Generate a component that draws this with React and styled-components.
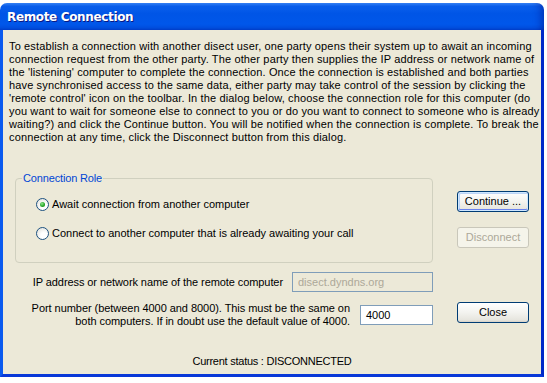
import styled, { createGlobalStyle } from "styled-components";

const GlobalStyle = createGlobalStyle`
  body {
    margin: 0;
    background: #fff;
    font-family: "Liberation Sans", Arial, sans-serif;
  }
`;

const Window = styled.div`
  width: 544px;
  margin-top: 3px;
  display: flex;
  flex-direction: column;
`;

const TitleBar = styled.div`
  height: 27px;
  border-radius: 7px 7px 0 0;
  background: linear-gradient(
    to bottom,
    #3a8cff 0%,
    #0a5fec 12%,
    #0055e6 40%,
    #0057ea 80%,
    #0050e0 92%,
    #0043cf 100%
  );
  box-shadow: inset -6px 0 8px -4px rgba(0, 20, 140, 0.6);
  display: flex;
  align-items: center;
  padding-left: 7px;
  padding-top: 1px;
  box-sizing: border-box;
`;

const Title = styled.span`
  font-family: "DejaVu Sans", sans-serif;
  font-weight: bold;
  font-size: 12px;
  color: #fff;
  text-shadow: 1px 1px 0 #0a1883;
  letter-spacing: -0.35px;
`;

const Body = styled.div`
  height: 347px;
  box-sizing: border-box;
  background: #ece9d8;
  border-left: 3px solid #0a5aef;
  border-right: 3px solid #0028c8;
  border-bottom: 3px solid #0838d8;
  padding: 10px 6px 0;
  font-size: 11px;
  line-height: 13px;
  color: #000;
`;

const Intro = styled.div`
  white-space: nowrap;
  letter-spacing: 0.14px;
`;

const Layout = styled.div`
  display: grid;
  grid-template-columns: 418px 72px;
  column-gap: 24px;
  align-items: start;
  margin-top: 28px;
  padding-left: 6px;
`;

const GroupBox = styled.fieldset`
  margin: 0;
  padding: 0;
  min-width: 0;
  border: 1px solid #d0d0bf;
  border-radius: 4px;
  height: 91px;
  box-sizing: border-box;
`;

const Legend = styled.legend`
  margin-left: 6px;
  padding: 0 1px;
  color: #0046d5;
  letter-spacing: -0.15px;
`;

const Options = styled.div`
  display: flex;
  flex-direction: column;
  gap: 16px;
  padding: 13px 0 0 20px;
`;

const Option = styled.label`
  display: flex;
  align-items: center;
  gap: 3px;
  height: 13px;
`;

const RadioCircle = styled.span`
  width: 13px;
  height: 13px;
  box-sizing: border-box;
  border-radius: 50%;
  border: 1px solid #1c5180;
  background: radial-gradient(circle at 65% 70%, #fff 30%, #dcdcd5 100%);
  display: flex;
  align-items: center;
  justify-content: center;
  &::after {
    content: "";
    display: ${(p) => (p.$checked ? "block" : "none")};
    width: 5px;
    height: 5px;
    border-radius: 50%;
    background: radial-gradient(circle at 40% 35%, #8ee88e 0%, #21a121 60%, #1a7f1a 100%);
  }
`;

const ButtonColumn = styled.div`
  display: flex;
  flex-direction: column;
  gap: 15px;
  padding-top: 19px;
`;

const Button = styled.div`
  width: 72px;
  height: 21px;
  box-sizing: border-box;
  border-radius: 3px;
  border: 1px solid ${(p) => (p.$disabled ? "#c9c7ba" : "#003c74")};
  background: ${(p) =>
    p.$disabled
      ? "#f5f4ea"
      : "linear-gradient(to bottom, #fff 0%, #f3f3ef 50%, #e6e5de 90%, #d6d0c5 100%)"};
  box-shadow: ${(p) =>
    p.$default
      ? "inset 0 0 0 1px #cee7ff, inset 0 -1px 0 1px #6982ee, inset 1px 1px 0 1px #bcd4f6"
      : "none"};
  color: ${(p) => (p.$disabled ? "#aca899" : "#000")};
  display: flex;
  align-items: center;
  justify-content: center;
`;

const FieldRow = styled.div`
  display: flex;
  align-items: center;
  justify-content: flex-end;
  gap: ${(p) => p.$gap}px;
  margin-top: ${(p) => p.$top}px;
`;

const FieldLabel = styled.div`
  text-align: right;
  white-space: nowrap;
  letter-spacing: ${(p) => p.$spacing}px;
`;

const TextBox = styled.div`
  width: ${(p) => p.$width}px;
  height: 20px;
  box-sizing: border-box;
  border: 1px solid #7f9db9;
  background: ${(p) => (p.$disabled ? "#ece9d8" : "#fff")};
  color: ${(p) => (p.$disabled ? "#aca899" : "#000")};
  padding: 3px 0 0 5px;
`;

const CloseCell = styled.div`
  align-self: start;
  margin-top: 10px;
`;

const Status = styled.div`
  text-align: center;
  margin-top: 27px;
  letter-spacing: -0.25px;
`;

const introLines = [
  "To establish a connection with another disect user, one party opens their system up to await an incoming",
  "connection request from the other party. The other party then supplies the IP address or network name of",
  "the 'listening' computer to complete the connection. Once the connection is established and both parties",
  "have synchronised access to the same data, either party may take control of the session by clicking the",
  "'remote control' icon on the toolbar. In the dialog below, choose the connection role for this computer (do",
  "you want to wait for someone else to connect to you or do you want to connect to someone who is already",
  "waiting?) and click the Continue button. You will be notified when the connection is complete. To break the",
  "connection at any time, click the Disconnect button from this dialog.",
];

export default function App() {
  return (
    <>
      <GlobalStyle />
      <Window>
        <TitleBar>
          <Title>Remote Connection</Title>
        </TitleBar>
        <Body>
          <Intro>
            {introLines.map((l) => (
              <div key={l}>{l}</div>
            ))}
          </Intro>
          <Layout>
            <GroupBox>
              <Legend>Connection Role</Legend>
              <Options>
                <Option>
                  <RadioCircle $checked />
                  Await connection from another computer
                </Option>
                <Option>
                  <RadioCircle />
                  Connect to another computer that is already awaiting your call
                </Option>
              </Options>
            </GroupBox>
            <ButtonColumn>
              <Button $default>Continue ...</Button>
              <Button $disabled>Disconnect</Button>
            </ButtonColumn>

            <FieldRow $gap={9} $top={9}>
              <FieldLabel $spacing={-0.08}>
                IP address or network name of the remote computer
              </FieldLabel>
              <TextBox $width={141} $disabled>
                disect.dyndns.org
              </TextBox>
            </FieldRow>
            <div />

            <FieldRow $gap={10} $top={10}>
              <FieldLabel $spacing={-0.05}>
                Port number (between 4000 and 8000). This must be the same on
                <br />
                both computers. If in doubt use the default value of 4000.
              </FieldLabel>
              <TextBox $width={73}>4000</TextBox>
            </FieldRow>
            <CloseCell>
              <Button>Close</Button>
            </CloseCell>
          </Layout>
          <Status>Current status : DISCONNECTED</Status>
        </Body>
      </Window>
    </>
  );
}
